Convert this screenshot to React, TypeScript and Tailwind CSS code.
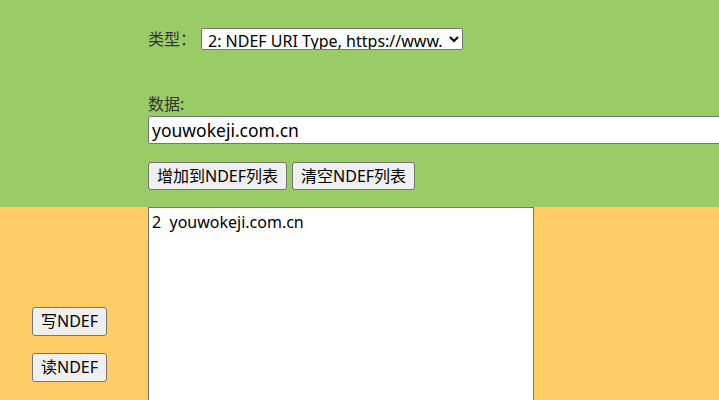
export default function App() {
  const font = { fontFamily: '"Noto Sans", "Noto Sans CJK SC", sans-serif' };
  return (
    <div className="text-[16px] text-black font-['Noto_Sans','Noto_Sans_CJK_SC',sans-serif]" style={font}>
      <div className="h-[207px] bg-[#99cc66] pl-[148px] pt-[28px]">
        <div className="flex h-[22px] items-center">
          <span className="text-[#333333]">类型：</span>
          <select className="ml-[5px] h-[22px] w-[262px] rounded-[2px] border border-[#767676] bg-white px-[2px] text-[16px] leading-[20px]">
            <option>2: NDEF URI Type, https://www.</option>
          </select>
        </div>
        <div className="mt-[42px] leading-[24px] text-[#333333]">数据:</div>
        <input
          className="mt-[0px] block h-[28px] w-[580px] rounded-[2px] border border-[#767676] bg-white px-[3px] text-[17.5px]"
          defaultValue="youwokeji.com.cn"
        />
        <div className="mt-[18px] flex gap-[5px]">
          <button className="h-[28px] rounded-[3px] border border-[#767676] bg-[#efefef] px-[8px] leading-[24px]">
            增加到NDEF列表
          </button>
          <button className="h-[28px] rounded-[3px] border border-[#767676] bg-[#efefef] px-[8px] leading-[24px]">
            清空NDEF列表
          </button>
        </div>
      </div>
      <div className="flex bg-[#ffcc66]">
        <div className="flex w-[148px] flex-col items-start gap-[17px] pl-[32px] pt-[100px]">
          <button className="h-[29px] rounded-[3px] border border-[#767676] bg-[#efefef] px-[8px] leading-[25px]">
            写NDEF
          </button>
          <button className="h-[29px] rounded-[3px] border border-[#767676] bg-[#efefef] px-[8px] leading-[25px]">
            读NDEF
          </button>
        </div>
        <textarea
          className="block h-[260px] w-[386px] resize-none border border-[#767676] bg-white px-[3px] py-[2px] leading-[24px]"
          defaultValue={"2  youwokeji.com.cn"}
        />
      </div>
    </div>
  );
}
